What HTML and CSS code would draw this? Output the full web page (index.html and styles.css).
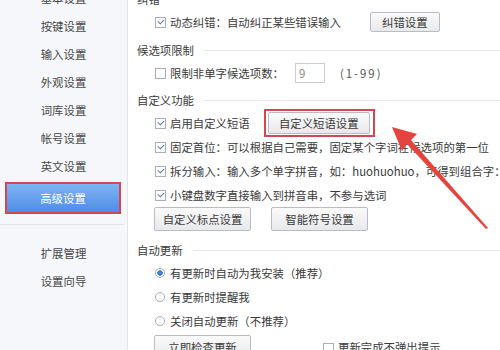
FILE: index.html
```html
<!DOCTYPE html>
<html lang="zh-CN">
<head>
  <meta charset="UTF-8" />
  <title>高级设置</title>
  <link rel="stylesheet" href="styles.css">
</head>
<body>
  <div class="window">
    <!-- Menu de gauche -->
    <aside class="sidebar">
      <ul class="nav">
        <li>基本设置</li>
        <li>按键设置</li>
        <li>输入设置</li>
        <li>外观设置</li>
        <li>词库设置</li>
        <li>帐号设置</li>
        <li>英文设置</li>
        <li class="active">高级设置</li>
      </ul>
      <div class="nav-sep"></div>
      <ul class="nav nav-extra">
        <li>扩展管理</li>
        <li>设置向导</li>
      </ul>
    </aside>

    <!-- Contenu -->
    <main class="content">
      <div class="group-title">纠错</div>
      <div class="row">
        <span class="check on"></span>
        <span>动态纠错：自动纠正某些错误输入</span>
        <button class="btn btn-small btn-fix">纠错设置</button>
      </div>

      <div class="group-title gap-5">候选项限制</div>
      <div class="row">
        <span class="check"></span>
        <span>限制非单字候选项数：</span>
        <span class="num-input">9</span>
        <span class="range">(1-99)</span>
      </div>

      <div class="group-title gap-4">自定义功能</div>
      <div class="row">
        <span class="check on"></span>
        <span>启用自定义短语</span>
        <span class="mark-box"><button class="btn btn-phrase">自定义短语设置</button></span>
      </div>
      <div class="row">
        <span class="check on"></span>
        <span>固定首位：可以根据自己需要，固定某个字词在候选项的第一位</span>
      </div>
      <div class="row">
        <span class="check on"></span>
        <span class="nowrap">拆分输入：输入多个单字拼音，如：huohuohuo，可得到组合字：焱</span>
      </div>
      <div class="row">
        <span class="check on"></span>
        <span>小键盘数字直接输入到拼音串，不参与选词</span>
      </div>
      <div class="row btn-row">
        <button class="btn">自定义标点设置</button>
        <button class="btn">智能符号设置</button>
      </div>

      <div class="group-title gap-8">自动更新</div>
      <div class="row">
        <span class="radio on"></span>
        <span>有更新时自动为我安装（推荐）</span>
      </div>
      <div class="row">
        <span class="radio"></span>
        <span>有更新时提醒我</span>
      </div>
      <div class="row">
        <span class="radio"></span>
        <span>关闭自动更新（不推荐）</span>
      </div>
      <div class="row btn-row last-row">
        <button class="btn">立即检查更新</button>
        <span class="check silent"></span>
        <span>更新完成不弹出提示</span>
      </div>
    </main>

    <!-- Flèche rouge d'annotation -->
    <svg class="arrow" viewBox="0 0 500 350" xmlns="http://www.w3.org/2000/svg">
      <polygon points="392,127 417,134 411,140 488,228 486,229 407,144 402,151" fill="#e5443e"/>
    </svg>
  </div>
</body>
</html>
```

FILE: styles.css
```css
/* Base */
* {
  margin: 0;
  padding: 0;
  box-sizing: border-box;
}
html, body {
  width: 500px;
  height: 350px;
  overflow: hidden;
  background: #fff;
}
body {
  font-family: "Noto Sans CJK SC", "Noto Sans", sans-serif;
  font-size: 11.4px;
  color: #3a3a3a;
}

.window {
  position: relative;
  display: grid;
  grid-template-columns: 128px 1fr;
  height: 350px;
  overflow: hidden;
}

/* Menu de gauche */
.sidebar {
  background: #f5f7fa;
  border-right: 1px solid #e1e5eb;
}
.nav {
  list-style: none;
  margin-top: -16px;
}
.nav li {
  height: 28px;
  line-height: 28px;
  text-align: center;
  color: #484848;
}
.nav li.active {
  height: 32px;
  line-height: 28px;
  margin: 2px 6px 0 5px;
  border: 2px solid #d6464f;
  background: linear-gradient(#7fb4f4, #4f8ce6);
  color: #fff;
}
.nav-sep {
  margin: 10px 3px 0 0;
  border-top: 1px solid #e0e3e8;
}
.nav-extra {
  margin-top: 14px;
}

/* Contenu */
.content {
  margin-top: -12px;
  padding-left: 9px;
}
.group-title {
  display: flex;
  align-items: center;
  gap: 10px;
  height: 22px;
  white-space: nowrap;
}
.group-title::after {
  content: "";
  flex: 1;
  border-top: 1px solid #e6e6e6;
}
.gap-4 { margin-top: 4px; }
.gap-5 { margin-top: 5px; }
.gap-8 { margin-top: 8px; }

.row {
  display: flex;
  align-items: center;
  height: 24px;
  padding-left: 18px;
  white-space: nowrap;
}
.nowrap {
  white-space: nowrap;
}

/* Cases et boutons radio */
.check {
  position: relative;
  width: 11px;
  height: 11px;
  margin-right: 4px;
  flex: none;
  border: 1px solid #a7afbb;
  background: #fff;
}
.check.on::after {
  content: "";
  position: absolute;
  left: 2px;
  top: 1px;
  width: 5px;
  height: 3px;
  border-left: 1.5px solid #5d7eb3;
  border-bottom: 1.5px solid #5d7eb3;
  transform: rotate(-45deg);
}
.radio {
  width: 10px;
  height: 10px;
  margin-right: 5px;
  flex: none;
  border: 1px solid #a7afbb;
  border-radius: 50%;
  background: #fff;
}
.radio.on {
  background: radial-gradient(circle, #3f7fd9 0 2.5px, #fff 3px);
}

/* Champs */
.num-input {
  width: 30px;
  height: 20px;
  margin-left: 11px;
  padding-left: 3px;
  line-height: 18px;
  border: 1px solid #c9ced6;
  color: #8a8a8a;
}
.range {
  margin-left: 15px;
  letter-spacing: 2px;
  color: #555;
}

/* Boutons */
.btn {
  width: 97px;
  height: 24px;
  font: inherit;
  color: #3a3a3a;
  border: 1px solid #b9bcc2;
  border-radius: 2px;
  background: linear-gradient(#fafafa, #e8e9eb);
}
.btn-small {
  width: 70px;
  height: 20px;
}
.btn-fix {
  margin-left: 29px;
}
.btn-phrase {
  width: 102px;
  height: 22px;
}
.mark-box {
  display: flex;
  margin-left: 14px;
  padding: 1px 3px 1px 2px;
  border: 2px solid #d6464f;
}
.btn-row {
  gap: 20px;
  padding-left: 17px;
}
.last-row {
  align-items: flex-start;
  height: 30px;
  gap: 0;
}
.last-row .btn {
  margin-top: 2px;
}
.check.silent {
  margin: 10px 4px 0 72px;
}
.last-row .check.silent + span {
  margin-top: 6px;
}

/* Flèche d'annotation */
.arrow {
  position: absolute;
  left: 0;
  top: 0;
  width: 500px;
  height: 350px;
  pointer-events: none;
}
```
